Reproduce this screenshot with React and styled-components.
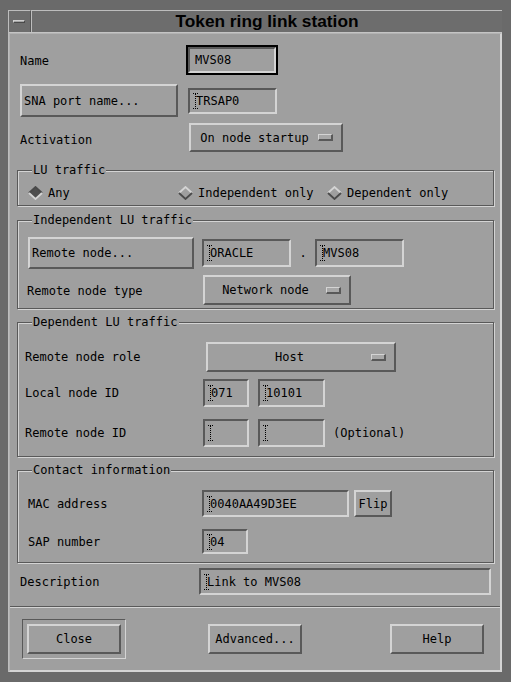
import React from "react";
import styled, { createGlobalStyle, css } from "styled-components";

const BG = "#9f9f9f";
const LIGHT = "#d4d4d4";
const DARK = "#595959";
const FRAME = "#6a6a6a";

const GlobalStyle = createGlobalStyle`
  html, body {
    margin: 0;
    padding: 0;
    background: ${FRAME};
  }
  body {
    font-family: "DejaVu Sans Mono", "Liberation Mono", monospace;
    font-size: 12px;
    color: #000;
  }
`;

const raised = css`
  border-style: solid;
  border-width: 2px;
  border-color: ${LIGHT} ${DARK} ${DARK} ${LIGHT};
`;

const sunken = css`
  border-style: solid;
  border-width: 2px;
  border-color: ${DARK} ${LIGHT} ${LIGHT} ${DARK};
`;

const Window = styled.div`
  width: 511px;
  height: 682px;
  box-sizing: border-box;
  padding: 10px 9px 10px 8px;
  background: ${FRAME};
  display: flex;
`;

const Wrapper = styled.div`
  flex: 1;
  display: flex;
  flex-direction: column;
  border-left: 1px solid #bdbdbd;
`;

const TitleBar = styled.div`
  height: 23px;
  box-sizing: border-box;
  display: flex;
  border-bottom: 1px solid #c4c4c4;
  background: #6d6d6d;
`;

const MenuBox = styled.div`
  width: 22px;
  box-sizing: border-box;
  border-top: 1px solid #bdbdbd;
  border-right: 1px solid #555;
  display: flex;
  align-items: center;
  justify-content: center;
`;

const MenuGlyph = styled.span`
  width: 12px;
  height: 3px;
  box-sizing: border-box;
  border-top: 1px solid #cfcfcf;
  border-left: 1px solid #cfcfcf;
  border-bottom: 1px solid #4a4a4a;
  border-right: 1px solid #4a4a4a;
  background: #a5a5a5;
  margin-left: -1px;
`;

const TitleText = styled.div`
  flex: 1;
  border-top: 1px solid #bdbdbd;
  border-left: 1px solid #bdbdbd;
  font-family: "Liberation Sans", Arial, sans-serif;
  font-weight: bold;
  font-size: 17.3px;
  line-height: 20px;
  text-align: center;
  color: #000;
`;

const Client = styled.div`
  flex: 1;
  background: ${BG};
  border-top: 1px solid #b2b2b2;
  border-left: 1px solid #b2b2b2;
  border-right: 2px solid ${LIGHT};
  border-bottom: 2px solid ${LIGHT};
  padding: 11px 6px 0 7px;
  display: flex;
  flex-direction: column;
`;

const Row = styled.div`
  display: flex;
  align-items: center;
  height: ${(p) => p.$h}px;
  margin-top: ${(p) => p.$mt || 0}px;
  padding-left: ${(p) => p.$pl || 0}px;
  flex-shrink: 0;
`;

const Label = styled.span`
  width: ${(p) => p.$w}px;
  flex-shrink: 0;
  white-space: pre;
  padding-top: ${(p) => p.$dy || 0}px;
`;

const Group = styled.div`
  height: ${(p) => p.$h}px;
  margin-top: ${(p) => p.$mt}px;
  box-sizing: border-box;
  border: 1px solid ${DARK};
  box-shadow: inset 1px 1px 0 ${LIGHT}, 1px 1px 0 ${LIGHT};
  display: flex;
  flex-direction: column;
  flex-shrink: 0;
`;

const GroupTitle = styled.span`
  align-self: flex-start;
  height: 14px;
  line-height: 14px;
  margin: -8px 0 0 14px;
  padding: 0 1px;
  background: ${BG};
  white-space: pre;
`;

const Field = styled.div`
  ${sunken}
  box-sizing: border-box;
  width: ${(p) => p.$w}px;
  height: ${(p) => p.$h || 28}px;
  margin-left: ${(p) => p.$ml || 0}px;
  padding-left: ${(p) => p.$pad ?? 3}px;
  display: flex;
  align-items: center;
  flex-shrink: 0;
  white-space: pre;
  background: ${BG};
`;

const FocusRing = styled.div`
  border: 2px solid #000;
  flex-shrink: 0;
`;

const Caret = styled.svg`
  flex-shrink: 0;
  margin-right: -3px;
`;

const PushButton = styled.button`
  ${raised}
  box-sizing: border-box;
  width: ${(p) => p.$w}px;
  height: ${(p) => p.$h || 30}px;
  margin-left: ${(p) => p.$ml || 0}px;
  padding: 0 2px;
  background: ${BG};
  color: #000;
  font: inherit;
  text-align: ${(p) => (p.$left ? "left" : "center")};
  white-space: pre;
  flex-shrink: 0;
  cursor: default;
`;

const OptionMenu = styled.div`
  ${raised}
  box-sizing: border-box;
  width: ${(p) => p.$w}px;
  height: ${(p) => p.$h || 30}px;
  margin-left: ${(p) => p.$ml || 0}px;
  display: flex;
  align-items: center;
  flex-shrink: 0;
`;

const OptionText = styled.span`
  flex: 1;
  text-align: center;
  white-space: pre;
`;

const Indicator = styled.span`
  width: 15px;
  height: 7px;
  box-sizing: border-box;
  margin-right: 8px;
  border-style: solid;
  border-width: 1px 2px 2px 1px;
  border-color: ${LIGHT} ${DARK} ${DARK} ${LIGHT};
  background: #a8a8a8;
`;

const RadioItem = styled.span`
  width: ${(p) => (p.$w ? `${p.$w}px` : "auto")};
  display: flex;
  align-items: center;
  gap: 5px;
  flex-shrink: 0;
  white-space: pre;
`;

const Sep = styled.span`
  width: 24px;
  text-align: center;
  flex-shrink: 0;
`;

const Note = styled.span`
  margin-left: 8px;
  white-space: pre;
`;

const Separator = styled.div`
  margin: 11px -6px 0 -7px;
  border-top: 1px solid ${DARK};
  border-bottom: 1px solid ${LIGHT};
  flex-shrink: 0;
`;

const ButtonBar = styled.div`
  display: flex;
  align-items: center;
  margin-top: 11px;
  padding-left: 5px;
`;

const DefaultRing = styled.div`
  padding: 4px;
  border-style: solid;
  border-width: 1px;
  border-color: ${DARK} ${LIGHT} ${LIGHT} ${DARK};
  flex-shrink: 0;
  display: flex;
`;

const IBeam = () => (
  <Caret width="6" height="16" viewBox="0 0 6 16">
    <path
      d="M0 0.5h5M2.5 1v14M0 15.5h5"
      stroke="#000"
      strokeWidth="1"
      strokeDasharray="1 1"
      fill="none"
    />
  </Caret>
);

const Diamond = ({ on }) => (
  <svg width="15" height="14" viewBox="0 0 15 14">
    <polygon points="7.5,1 14,7 7.5,13 1,7" fill={on ? "#4f4f4f" : BG} />
    <polyline
      points="1,7 7.5,1 14,7"
      fill="none"
      stroke={on ? "#4a4a4a" : LIGHT}
      strokeWidth="1.8"
    />
    <polyline
      points="1,7 7.5,13 14,7"
      fill="none"
      stroke={on ? LIGHT : "#4a4a4a"}
      strokeWidth="1.8"
    />
  </svg>
);

const TextField = ({ value = "", ...rest }) => (
  <Field {...rest}>
    <IBeam />
    {value}
  </Field>
);

const Option = ({ children, ...rest }) => (
  <OptionMenu {...rest}>
    <OptionText>{children}</OptionText>
    <Indicator />
  </OptionMenu>
);

export default function App() {
  return (
    <>
      <GlobalStyle />
      <Window>
        <Wrapper>
          <TitleBar>
            <MenuBox>
              <MenuGlyph />
            </MenuBox>
            <TitleText>Token ring link station</TitleText>
          </TitleBar>
          <Client>
            <Row $h={30} $pl={3}>
              <Label $w={166} $dy={2}>Name</Label>
              <FocusRing>
                <Field $w={88} $h={26} $pad={5}>MVS08</Field>
              </FocusRing>
            </Row>
            <Row $h={33} $mt={9} $pl={3}>
              <PushButton $w={158} $h={33} $left>SNA port name...</PushButton>
              <TextField $w={89} $h={26} $ml={10} value="TRSAP0" />
            </Row>
            <Row $h={29} $mt={6} $pl={3}>
              <Label $w={169} $dy={4}>Activation</Label>
              <Option $w={154} $h={29}>On node startup</Option>
            </Row>

            <Group $h={36} $mt={18}>
              <GroupTitle>LU traffic</GroupTitle>
              <Row $h={16} $mt={8} $pl={10}>
                <RadioItem $w={150}>
                  <Diamond on />
                  Any
                </RadioItem>
                <RadioItem $w={149}>
                  <Diamond />
                  Independent only
                </RadioItem>
                <RadioItem>
                  <Diamond />
                  Dependent only
                </RadioItem>
              </Row>
            </Group>

            <Group $h={89} $mt={14}>
              <GroupTitle>Independent LU traffic</GroupTitle>
              <Row $h={32} $mt={10} $pl={10}>
                <PushButton $w={166} $h={32} $left>Remote node...</PushButton>
                <TextField $w={89} $ml={8} value="ORACLE" />
                <Sep>.</Sep>
                <TextField $w={89} value="MVS08" />
              </Row>
              <Row $h={30} $mt={6} $pl={9}>
                <Label $w={176} $dy={2}>Remote node type</Label>
                <Option $w={148}>Network node</Option>
              </Row>
            </Group>

            <Group $h={135} $mt={13}>
              <GroupTitle>Dependent LU traffic</GroupTitle>
              <Row $h={30} $mt={13} $pl={7}>
                <Label $w={178}>Remote node role</Label>
                <Option $w={190} $ml={3}>Host</Option>
              </Row>
              <Row $h={28} $mt={7} $pl={7}>
                <Label $w={178}>Local node ID</Label>
                <TextField $w={46} value="071" />
                <TextField $w={67} $ml={9} value="10101" />
              </Row>
              <Row $h={28} $mt={12} $pl={7}>
                <Label $w={178}>Remote node ID</Label>
                <TextField $w={46} />
                <TextField $w={67} $ml={9} />
                <Note>(Optional)</Note>
              </Row>
            </Group>

            <Group $h={93} $mt={13}>
              <GroupTitle>Contact information</GroupTitle>
              <Row $h={27} $mt={13} $pl={10}>
                <Label $w={174}>MAC address</Label>
                <TextField $w={147} $h={27} value="0040AA49D3EE" />
                <PushButton $w={38} $h={27} $ml={5}>Flip</PushButton>
              </Row>
              <Row $h={25} $mt={12} $pl={10}>
                <Label $w={174}>SAP number</Label>
                <TextField $w={46} $h={25} value="04" />
              </Row>
            </Group>

            <Row $h={27} $mt={5} $pl={3}>
              <Label $w={179}>Description</Label>
              <TextField $w={292} $h={27} value="Link to MVS08" />
            </Row>

            <Separator />

            <ButtonBar>
              <DefaultRing>
                <PushButton $w={94}>Close</PushButton>
              </DefaultRing>
              <PushButton $w={94} $ml={82}>Advanced...</PushButton>
              <PushButton $w={94} $ml={88}>Help</PushButton>
            </ButtonBar>
          </Client>
        </Wrapper>
      </Window>
    </>
  );
}
